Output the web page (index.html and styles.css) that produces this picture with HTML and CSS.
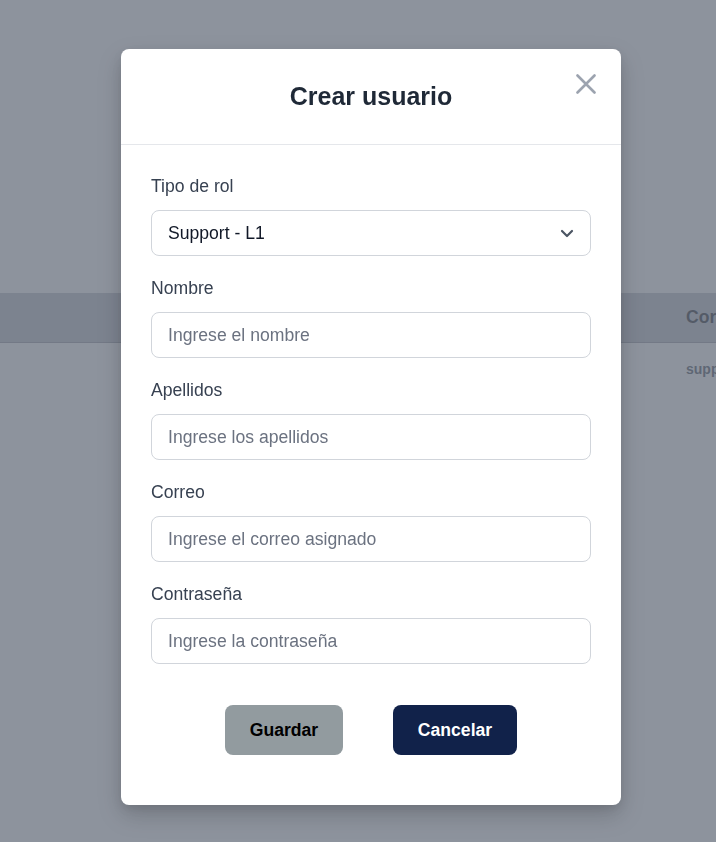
FILE: index.html
```html
<!DOCTYPE html>
<html lang="es">
<head>
<meta charset="utf-8">
<title>Crear usuario</title>
<link rel="stylesheet" href="styles.css">
</head>
<body>
<div class="page">
  <div class="table">
    <div class="thead">
      <div class="cell-spacer"></div>
      <div class="th">Correo</div>
    </div>
    <div class="trow">
      <div class="cell-spacer"></div>
      <div class="td">support@empresa.com</div>
    </div>
  </div>
</div>

<div class="backdrop">
  <div class="modal">
    <div class="modal-header">
      <h2 class="modal-title">Crear usuario</h2>
      <button class="close-btn" aria-label="Cerrar">
        <svg width="20" height="20" viewBox="0 0 20 20" fill="none" stroke="#9ca3af" stroke-width="2.6" stroke-linecap="round"><path d="M1.5 1.5 L18.5 18.5 M18.5 1.5 L1.5 18.5"/></svg>
      </button>
    </div>
    <form class="modal-body">
      <div class="field">
        <label class="label">Tipo de rol</label>
        <div class="select">
          <span>Support - L1</span>
          <svg width="14" height="9" viewBox="0 0 14 9" fill="none" stroke="#4b5563" stroke-width="2.2" stroke-linecap="round" stroke-linejoin="round"><path d="M2 2 L7 7 L12 2"/></svg>
        </div>
      </div>
      <div class="field">
        <label class="label">Nombre</label>
        <input class="input" type="text" placeholder="Ingrese el nombre">
      </div>
      <div class="field">
        <label class="label">Apellidos</label>
        <input class="input" type="text" placeholder="Ingrese los apellidos">
      </div>
      <div class="field">
        <label class="label">Correo</label>
        <input class="input" type="text" placeholder="Ingrese el correo asignado">
      </div>
      <div class="field">
        <label class="label">Contraseña</label>
        <input class="input" type="text" placeholder="Ingrese la contraseña">
      </div>
      <div class="actions">
        <button type="button" class="btn btn-save">Guardar</button>
        <button type="button" class="btn btn-cancel">Cancelar</button>
      </div>
    </form>
  </div>
</div>
</body>
</html>
```

FILE: styles.css
```css
* { box-sizing: border-box; }
html, body {
  margin: 0;
  padding: 0;
  height: 100%;
  overflow: hidden;
}
body {
  background: #ffffff;
  font-family: "Liberation Sans", Arial, sans-serif;
}
.page {
  padding-top: 293px;
  width: 1000px;
}
.thead {
  display: flex;
  height: 50px;
  align-items: center;
  background: #b6b9c3;
  border-bottom: 1px solid #8d919c;
}
.cell-spacer {
  width: 686px;
  flex: none;
}
.th {
  font-size: 17.6px;
  font-weight: bold;
  color: #0b0f18;
}
.trow {
  display: flex;
  height: 52px;
  align-items: center;
}
.td {
  font-size: 14px;
  font-weight: bold;
  color: #374151;
}
.backdrop {
  position: fixed;
  inset: 0;
  background: rgba(107, 114, 128, 0.77);
  display: flex;
  justify-content: center;
  align-items: flex-start;
  padding-top: 49px;
  padding-left: 26px;
}
.modal {
  width: 500px;
  background: #ffffff;
  border-radius: 8px;
  box-shadow: 0 10px 25px rgba(0, 0, 0, 0.18), 0 4px 10px rgba(0, 0, 0, 0.08);
}
.modal-header {
  position: relative;
  height: 96px;
  border-bottom: 1px solid #e5e7eb;
  display: flex;
  justify-content: center;
  align-items: center;
}
.modal-title {
  margin: 0;
  font-size: 25px;
  font-weight: bold;
  color: #1f2937;
}
.close-btn {
  position: absolute;
  top: 25px;
  right: 25px;
  width: 20px;
  height: 20px;
  padding: 0;
  border: 0;
  background: none;
  display: flex;
}
.modal-body {
  padding: 29px 30px 50px;
  display: flex;
  flex-direction: column;
  gap: 20px;
}
.field {
  display: flex;
  flex-direction: column;
  gap: 12px;
}
.label {
  font-size: 17.6px;
  line-height: 24px;
  color: #374151;
}
.select, .input {
  height: 46px;
  border: 1px solid #d1d5db;
  border-radius: 8px;
  font-family: "Liberation Sans", Arial, sans-serif;
  font-size: 17.6px;
  padding: 0 16px;
  width: 100%;
}
.select {
  display: flex;
  align-items: center;
  justify-content: space-between;
  color: #111827;
  padding-right: 16px;
}
.input {
  color: #111827;
  background: #fff;
  outline: none;
}
.input::placeholder {
  color: #6b7280;
}
.actions {
  display: flex;
  justify-content: center;
  gap: 50px;
  margin-top: 21px;
}
.btn {
  height: 50px;
  border: 0;
  border-radius: 8px;
  font-family: "Liberation Sans", Arial, sans-serif;
  font-size: 17.6px;
  font-weight: bold;
}
.btn-save {
  width: 118px;
  background: #929b9f;
  color: #000000;
}
.btn-cancel {
  width: 124px;
  background: #11224a;
  color: #ffffff;
}
```
